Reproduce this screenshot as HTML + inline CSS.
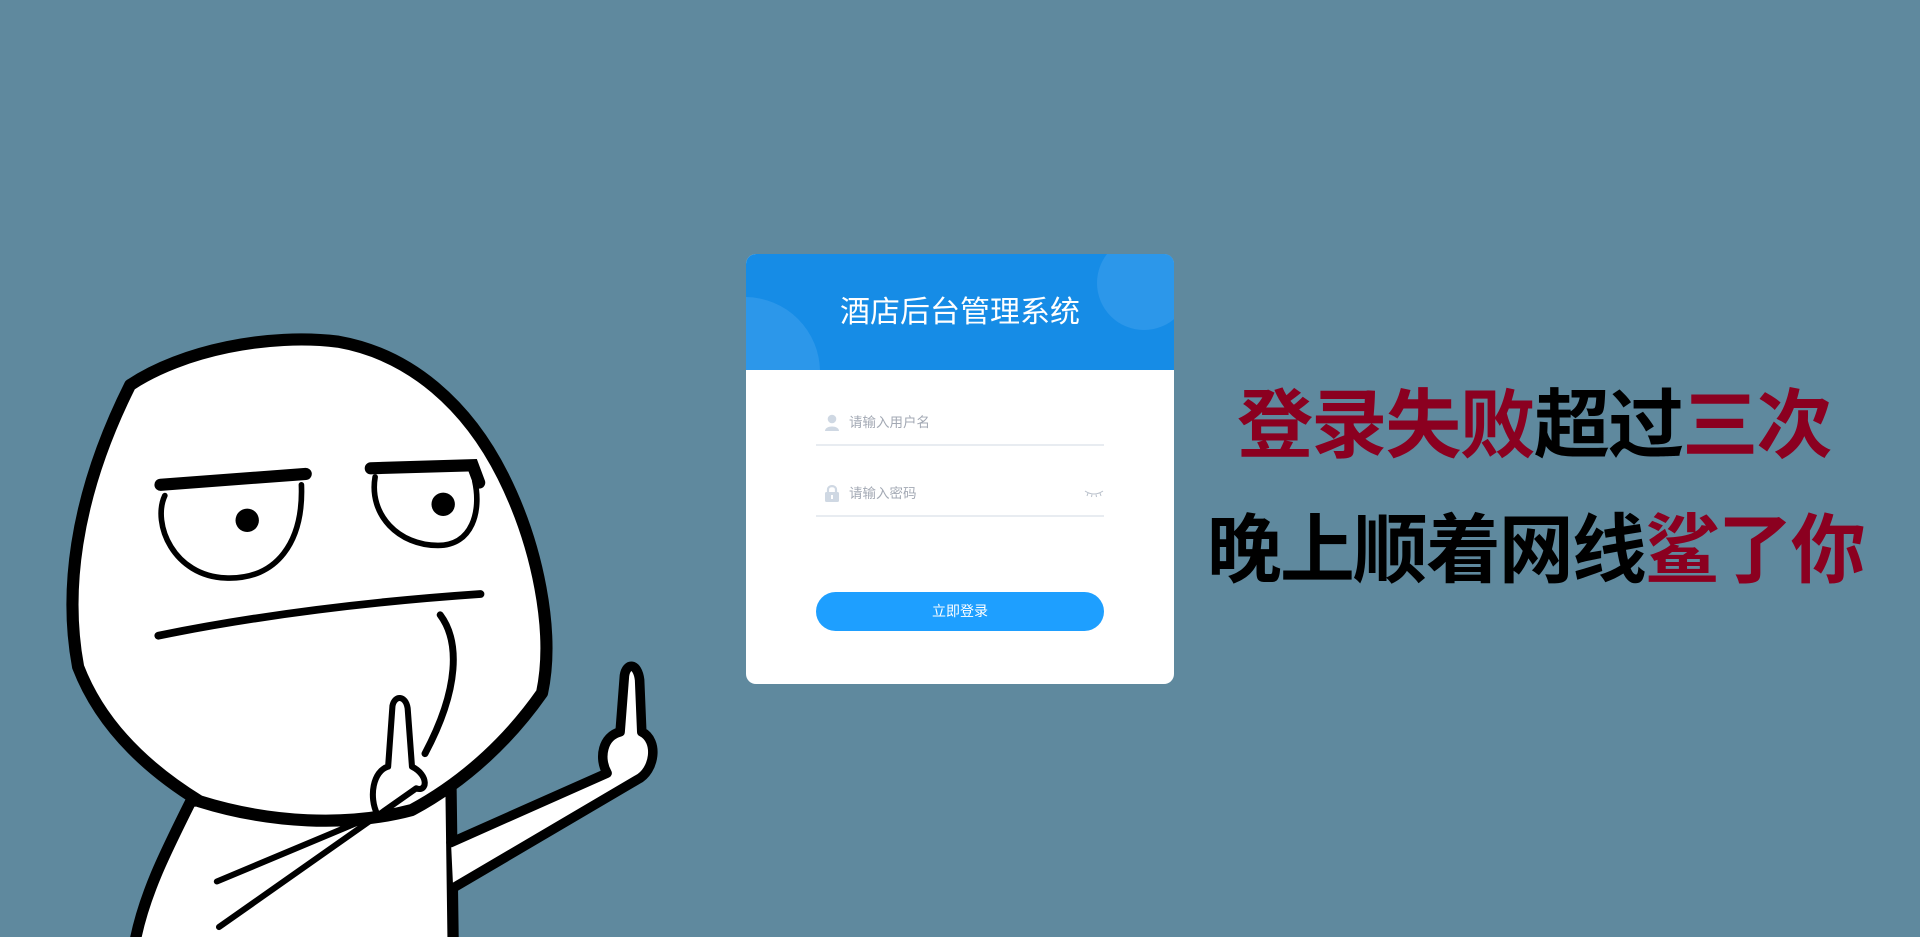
<!DOCTYPE html>
<html><head><meta charset="utf-8"><style>
*{margin:0;padding:0;box-sizing:border-box}
body{width:1920px;height:937px;background:#5f899e;position:relative;overflow:hidden;font-family:"Liberation Sans","Noto Sans CJK SC",sans-serif}
.card{position:absolute;left:746px;top:254px;width:428px;height:430px;background:#fff;border-radius:10px;overflow:hidden}
.head{position:absolute;left:0;top:0;width:428px;height:116px;background:#168ce6;overflow:hidden}
.c1{position:absolute;left:351px;top:-18px;width:94px;height:94px;border-radius:50%;background:#2c97ea}
.c2{position:absolute;left:-76px;top:43px;width:150px;height:150px;border-radius:50%;background:#2c97ea}
.title{position:absolute;left:0;width:428px;top:40px;text-align:center;color:#fff;font-size:30px;line-height:38px}
.field{position:absolute;left:70px;width:288px;height:32px;border-bottom:2px solid #e8ecf1}
.ph{position:absolute;left:33px;top:0;font-size:13.5px;color:#a3a9b4;line-height:18px}
.btn{position:absolute;left:70px;top:338px;width:288px;height:39px;border-radius:20px;background:#1e9fff;color:#fff;font-size:14px;text-align:center;line-height:39px}
.txt{position:absolute;font-weight:bold;font-family:"Noto Sans CJK SC",sans-serif;white-space:nowrap;transform-origin:left center;letter-spacing:-2px}
.r{color:#8b0020}.k{color:#000}
</style></head><body>
<svg style="position:absolute;left:0;top:320px" width="680" height="617" viewBox="0 0 1568 1423">
<g stroke="#000" stroke-linecap="round" stroke-linejoin="round" fill="#fff">
<path d="M440,1110 C380,1230 330,1330 310,1440 L1045,1440 L1040,1080 Z" stroke-width="26"/>
<path d="M1040,1205 L1400,1045 C1380,1010 1390,960 1430,950 L1440,820 C1445,790 1470,790 1475,830 L1480,950 C1520,970 1510,1040 1470,1060 L1045,1310" stroke-width="22"/>
<path d="M300,150 C420,70 620,30 780,50 C950,80 1080,200 1160,360 C1240,520 1280,720 1250,860 C1180,960 1080,1060 950,1130 C800,1170 620,1160 460,1110 C330,1030 230,930 180,800 C150,640 165,420 300,150 Z" stroke-width="28"/>
<path d="M500,1295 L870,1140 C850,1100 860,1040 895,1030 L905,890 C910,865 935,865 940,895 L950,1030 C990,1050 985,1090 960,1080 L505,1400" stroke-width="14"/>
</g>
<g stroke="#000" stroke-linecap="round" fill="none">
<path d="M370,380 L705,355" stroke-width="28"/>
<path d="M855,342 L1090,335 L1105,375" stroke-width="28"/>
<path d="M380,405 C350,470 400,590 520,595 C640,600 700,510 695,380" stroke-width="13"/>
<path d="M865,362 C850,450 920,520 1010,520 C1090,520 1110,440 1095,372" stroke-width="13"/>
<path d="M365,728 Q700,660 1108,632" stroke-width="18"/>
<path d="M1015,680 C1060,740 1060,850 980,1000" stroke-width="16"/>
</g>
<circle cx="570" cy="462" r="27"/><circle cx="1022" cy="425" r="27"/>
</svg>
<div class="card">
<div class="head"><div class="c1"></div><div class="c2"></div><div class="title">酒店后台管理系统</div></div>
<div class="field" style="top:160px">
<svg style="position:absolute;left:8px;top:0" width="16" height="18" viewBox="0 0 16 18"><circle cx="8" cy="5" r="4.3" fill="#cfd8e3"/><path d="M1,17 C1,11 15,11 15,17 Z" fill="#cfd8e3"/></svg>
<div class="ph">请输入用户名</div></div>
<div class="field" style="top:231px">
<svg style="position:absolute;left:8px;top:-1px" width="16" height="18" viewBox="0 0 16 18"><path d="M4,8 V5.5 C4,1 12,1 12,5.5 V8" stroke="#cfd8e3" stroke-width="2.2" fill="none"/><rect x="1" y="8" width="14" height="10" rx="1.5" fill="#cfd8e3"/><rect x="7" y="11" width="2" height="4" fill="#fff"/></svg>
<div class="ph">请输入密码</div>
<svg style="position:absolute;left:268px;top:3px" width="20" height="10" viewBox="0 0 20 10"><path d="M1,3 Q10,9 19,3 M4,5 L3,8 M8,6.5 L7.5,9 M12,6.5 L12.5,9 M16,5 L17,8" stroke="#b8bfca" stroke-width="1" fill="none"/></svg>
</div>
<div class="btn">立即登录</div>
</div>
<div class="txt" style="left:1237px;top:367px;font-size:84px;line-height:106px;transform:scale(0.905,0.9)"><span class="r">登录失败</span><span class="k">超过</span><span class="r">三次</span></div>
<div class="txt" style="left:1207px;top:492px;font-size:84px;line-height:106px;transform:scale(0.89,0.9)"><span class="k">晚上顺着网线</span><span class="r">鲨了你</span></div>
</body></html>
